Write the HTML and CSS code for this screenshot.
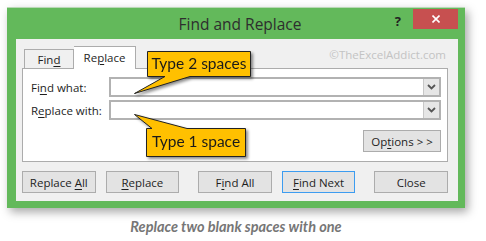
FILE: index.html
```html
<!DOCTYPE html>
<html lang="en">
<head>
  <meta charset="UTF-8">
  <title>Find and Replace</title>
  <link rel="stylesheet" href="styles.css">
</head>
<body>

  <div class="window">
    <div class="titlebar">
      <span class="title">Find and Replace</span>
      <span class="help">?</span>
      <span class="close">
        <svg width="8" height="8" viewBox="0 0 8 8"><path d="M0.5 0.5 L7.5 7.5 M7.5 0.5 L0.5 7.5" stroke="#fff" stroke-width="1.6"/></svg>
      </span>
    </div>

    <div class="client">
      <div class="tabs">
        <span class="tab"><span>Fin<u>d</u></span></span>
        <span class="tab active"><span>Re<u>p</u>lace</span></span>
        <span class="watermark">©TheExcelAddict.com</span>
      </div>

      <div class="panel">
        <div class="field">
          <label>Fi<u>n</u>d what:</label>
          <div class="combo"><span class="drop"><svg width="9" height="6" viewBox="0 0 9 6"><path d="M1 1 L4.5 4.5 L8 1" fill="none" stroke="#555" stroke-width="1.8"/></svg></span></div>
        </div>
        <div class="field">
          <label>R<u>e</u>place with:</label>
          <div class="combo"><span class="drop"><svg width="9" height="6" viewBox="0 0 9 6"><path d="M1 1 L4.5 4.5 L8 1" fill="none" stroke="#555" stroke-width="1.8"/></svg></span></div>
        </div>
        <div class="options-row">
          <span class="btn options"><span>Op<u>t</u>ions &gt; &gt;</span></span>
        </div>
      </div>

      <div class="buttons">
        <span class="btn"><span>Replace <u>A</u>ll</span></span>
        <span class="btn"><span><u>R</u>eplace</span></span>
        <span class="btn wide-gap"><span>F<u>i</u>nd All</span></span>
        <span class="btn default"><span><u>F</u>ind Next</span></span>
        <span class="btn wide-gap"><span>Close</span></span>
      </div>
    </div>
  </div>

  <p class="caption">Replace two blank spaces with one</p>

  <!-- callouts sit on top of the dialog -->
  <div class="callout callout-top">
    <svg width="118" height="44" viewBox="0 0 118 44"><path d="M13.5 0.5 H116.5 V25.5 H56 L0.5 42.5 L31 25.5 H13.5 Z" fill="#ffc000" stroke="#222" stroke-width="1"/></svg>
    <span class="callout-text">Type 2 spaces</span>
  </div>
  <div class="callout callout-bottom">
    <svg width="113" height="44" viewBox="0 0 113 44"><path d="M0.5 0.5 L53 14.5 H111.5 V42.5 H12.5 V14.5 H18 Z" fill="#ffc000" stroke="#222" stroke-width="1"/></svg>
    <span class="callout-text">Type 1 space</span>
  </div>

</body>
</html>
```

FILE: styles.css
```css
:root {
  --green: #63b95b;
  --face: #f0f0f0;
  --edge: #acacac;
  --text: #1e1e1e;
}

* {
  box-sizing: border-box;
  margin: 0;
  padding: 0;
}

body {
  font-family: 'Open Sans', 'Noto Sans', sans-serif;
  font-size: 11.5px;
  color: var(--text);
  background: #fff;
  width: 486px;
  height: 241px;
  position: relative;
  overflow: hidden;
}

u {
  text-decoration-thickness: 1px;
  text-underline-offset: 2px;
}

.window {
  margin: 7px 0 0 7px;
  width: 458px;
  background: var(--green);
  border-top: 1px solid #b9d9b5;
  padding: 0 7px 7px 9px;
  box-shadow: 3px 4px 9px rgba(0, 0, 0, 0.35);
}

.titlebar {
  height: 31px;
  display: flex;
  align-items: center;
  position: relative;
}

.title {
  flex: 1;
  text-align: center;
  font-size: 15.5px;
  color: #2e2e2e;
  padding-left: 6px;
}

.help {
  position: absolute;
  right: 57px;
  top: 4px;
  font-weight: 700;
  font-size: 13px;
  color: #222;
}

.close {
  position: absolute;
  right: 0;
  top: 1px;
  width: 45px;
  height: 20px;
  background: #c75050;
  display: flex;
  align-items: center;
  justify-content: center;
}

.client {
  background: var(--face);
  height: 162px;
  padding: 7px 10px 0 6px;
}

.tabs {
  display: flex;
  align-items: flex-end;
  height: 22px;
  padding-left: 2px;
  position: relative;
}

.tab {
  height: 19px;
  width: 50px;
  border: 1px solid var(--edge);
  border-bottom: none;
  background: #f0f0f0;
  display: flex;
  align-items: center;
  justify-content: center;
  padding-top: 1px;
}

.tab.active {
  height: 23px;
  width: 62px;
  background: #fff;
  margin-bottom: -1px;
  position: relative;
  z-index: 1;
  border-left: 1px solid var(--edge);
  padding-bottom: 2px;
}

.tab + .tab {
  border-left: none;
}

.watermark {
  margin-left: auto;
  align-self: center;
  margin-top: -6px;
  margin-right: 2px;
  color: #c3c3c3;
  font-size: 11.5px;
}

.panel {
  background: #fff;
  border: 1px solid var(--edge);
  height: 94px;
  padding: 8px 6px 0 8px;
  display: flex;
  flex-direction: column;
  gap: 3px;
}

.field {
  display: flex;
  align-items: center;
}

.field label {
  width: 78px;
  padding-top: 1px;
}

.combo {
  flex: 1;
  height: 20px;
  border: 2px solid #b2b2b2;
  display: flex;
  justify-content: flex-end;
  background: #fff;
}

.drop {
  width: 16px;
  background: #e6e6e6;
  border-left: 1px solid #c8c8c8;
  display: flex;
  align-items: center;
  justify-content: center;
}

.options-row {
  display: flex;
  justify-content: flex-end;
  margin-top: 7px;
}

.btn {
  width: 74px;
  height: 22px;
  border: 1px solid var(--edge);
  background: #e3e3e3;
  display: flex;
  align-items: center;
  justify-content: center;
}

.btn.options {
  width: 78px;
}

.btn.default {
  border-color: #3c9cf0;
}

.buttons {
  display: flex;
  gap: 10px;
  margin-top: 9px;
}

.buttons .wide-gap {
  margin-left: 9px;
}

.caption {
  margin-top: 10px;
  text-align: center;
  padding-right: 14px;
  font-family: 'Lato', 'Open Sans', sans-serif;
  font-style: italic;
  font-weight: 700;
  font-size: 14.5px;
  color: #767676;
}

.callout {
  position: absolute;
  filter: drop-shadow(2px 2px 1.5px rgba(0, 0, 0, 0.45));
}

.callout svg {
  display: block;
}

.callout-text {
  position: absolute;
  font-family: 'Lato', 'Open Sans', sans-serif;
  font-size: 15.5px;
  color: #1a1a1a;
  text-align: center;
}

.callout-top {
  left: 134px;
  top: 51px;
}

.callout-top .callout-text {
  left: 13px;
  width: 104px;
  top: 3px;
}

.callout-bottom {
  left: 134px;
  top: 114px;
}

.callout-bottom .callout-text {
  left: 12px;
  width: 100px;
  top: 18px;
}
```
